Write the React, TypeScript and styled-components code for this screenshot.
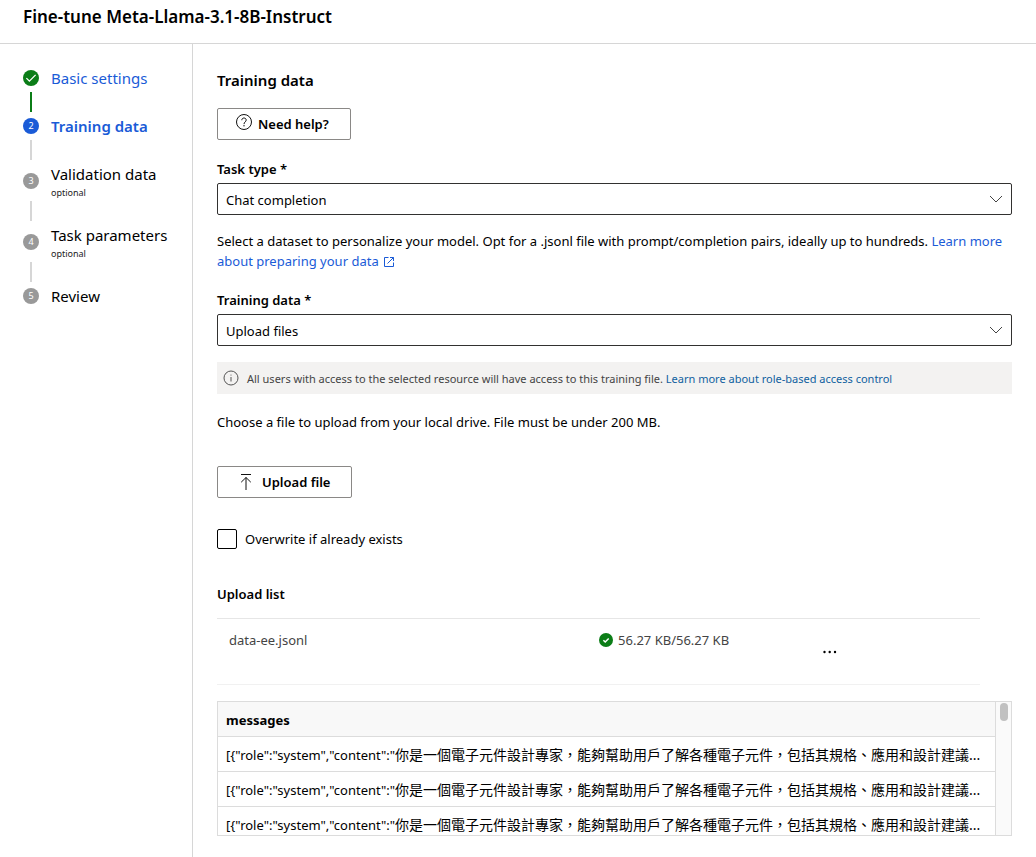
import React from 'react';
import styled, { createGlobalStyle } from 'styled-components';

const GlobalStyle = createGlobalStyle`
  *, *::before, *::after { box-sizing: border-box; }
  body {
    margin: 0;
    background: #fff;
    color: #000;
    font-family: "Noto Sans", "Noto Sans CJK TC", sans-serif;
    font-size: 13px;
    line-height: 20px;
  }
  button, select, input { font: inherit; color: inherit; }
`;

const Page = styled.div`
  display: flex;
  flex-direction: column;
  min-height: 100vh;
`;

const Header = styled.header`
  padding: 5px 23px 14px;
  border-bottom: 1px solid #d6d6d6;
`;

const Title = styled.h1`
  margin: 0;
  font-size: 17px;
  line-height: 24px;
  font-weight: 600;
`;

const Body = styled.div`
  display: flex;
  flex: 1;
`;

const Sidebar = styled.nav`
  flex: 0 0 193px;
  padding: 22px 16px 24px 23px;
  border-right: 1px solid #d6d6d6;
`;

const Steps = styled.ol`
  list-style: none;
  margin: 0;
  padding: 0;
`;

const StepLink = styled.a<{ $tone: string; $current?: boolean }>`
  display: flex;
  align-items: center;
  gap: 12px;
  color: ${(p) => p.$tone};
  font-size: 15px;
  line-height: 24px;
  font-weight: ${(p) => (p.$current ? 600 : 400)};
  text-decoration: none;
`;

const StepText = styled.span`
  display: flex;
  flex-direction: column;
`;

const Optional = styled.small`
  color: #222;
  font-size: 9px;
  line-height: 13px;
`;

const Badge = styled.span<{ $fill: string }>`
  display: flex;
  align-items: center;
  justify-content: center;
  flex: none;
  width: 16px;
  height: 16px;
  border-radius: 50%;
  background: ${(p) => p.$fill};
  color: #fff;
  font-size: 9px;
  line-height: 16px;
  font-weight: 400;
`;

const Connector = styled.div<{ $fill: string }>`
  width: 2px;
  height: 20px;
  margin: 2px 0 2px 7px;
  background: ${(p) => p.$fill};
`;

const Main = styled.main`
  flex: 1;
  min-width: 0;
  padding: 24px 24px 21px;
`;

const Heading = styled.h2`
  margin: 0 0 16px;
  font-size: 15px;
  line-height: 24px;
  font-weight: 600;
`;

const OutlineButton = styled.button<{ $gap: number; $pad: number }>`
  display: flex;
  align-items: center;
  gap: ${(p) => p.$gap}px;
  height: 32px;
  padding: 0 21px 0 ${(p) => p.$pad}px;
  border: 1px solid #8a8886;
  border-radius: 2px;
  background: #fff;
  font-weight: 600;
`;

const Field = styled.div`
  display: flex;
  flex-direction: column;
  gap: 4px;
  margin-top: 19px;
`;

const Label = styled.label`
  font-weight: 600;
`;

const SelectBox = styled.div`
  position: relative;
  svg {
    position: absolute;
    right: 9px;
    top: 10px;
    pointer-events: none;
  }
`;

const Select = styled.select`
  display: block;
  appearance: none;
  width: 100%;
  height: 32px;
  padding: 1px 32px 0 8px;
  border: 1px solid #323130;
  border-radius: 2px;
  background: #fff;
`;

const Paragraph = styled.p<{ $top: number }>`
  margin: ${(p) => p.$top}px 0 0;
`;

const Link = styled.a`
  color: #1a5bd7;
  text-decoration: none;
  svg { vertical-align: -1px; margin-left: 2px; }
`;

const Notice = styled.div`
  display: flex;
  align-items: center;
  gap: 8px;
  min-height: 32px;
  margin-top: 16px;
  padding: 2px 6px 0;
  background: #f3f2f1;
  color: #444;
  font-size: 11px;
`;

const NoticeLink = styled.a`
  color: #0f5f9f;
  text-decoration: none;
`;

const UploadArea = styled.div`
  margin-top: 34px;
`;

const CheckLabel = styled.label`
  display: flex;
  align-items: center;
  gap: 8px;
  margin-top: 31px;
`;

const Checkbox = styled.input`
  appearance: none;
  width: 20px;
  height: 20px;
  margin: 0;
  border: 1px solid #000;
  border-radius: 2px;
  background: #fff;
  &:checked { background: #1a5bd7; }
`;

const SubHeading = styled.h3`
  margin: 35px 0 14px;
  font-size: 13px;
  line-height: 20px;
  font-weight: 600;
`;

const UploadFrame = styled.div`
  margin: 0 32px 16px 0;
  border-top: 1px solid #e6e6e6;
  border-bottom: 1px solid #f1f1f1;
`;

const UploadTable = styled.table`
  width: 100%;
  table-layout: fixed;
  border-collapse: collapse;
  color: #444;
`;

const UploadCell = styled.td<{ $width?: string }>`
  width: ${(p) => p.$width || 'auto'};
  height: 65px;
  padding: 11px 12px 0;
  vertical-align: top;
`;

const ActionCell = styled.td`
  padding: 0 3px;
  vertical-align: middle;
`;

const Status = styled.span`
  display: flex;
  align-items: center;
  gap: 5px;
`;

const MoreButton = styled.button`
  display: flex;
  align-items: center;
  justify-content: center;
  width: 32px;
  height: 32px;
  padding: 0;
  border: 0;
  background: transparent;
`;

const Preview = styled.div`
  display: flex;
  height: 135px;
  border: 1px solid #dcdcdc;
`;

const PreviewScroll = styled.div`
  flex: 1;
  min-width: 0;
  overflow: hidden;
`;

const PreviewTable = styled.table`
  width: 100%;
  table-layout: fixed;
  border-collapse: separate;
  border-spacing: 0;
  th, td {
    height: 35px;
    padding: 2px 8px 0;
    border-bottom: 1px solid #dcdcdc;
    text-align: left;
    white-space: nowrap;
    overflow: hidden;
  }
  th {
    background: #f8f8f8;
    font-weight: 700;
  }
`;

const Content = styled.span`
  font-size: 14px;
`;

const Track = styled.div`
  flex: 0 0 16px;
  padding: 1px 3px 0 4px;
  border-left: 1px solid #dcdcdc;
  background: #fafafa;
`;

const Thumb = styled.div`
  width: 8px;
  height: 18px;
  border-radius: 4px;
  background: #c1c1c1;
`;

const Chevron = () => (
  <svg width="14" height="12" viewBox="0 0 14 12" fill="none" stroke="#444" aria-hidden="true">
    <path d="M1 3l6 6 6-6" />
  </svg>
);

const CheckIcon = () => (
  <svg width="16" height="16" viewBox="0 0 16 16" fill="none" stroke="#fff" strokeWidth="1.3" aria-hidden="true">
    <path d="M3.4 8.1l3 3 6.2-6.2" />
  </svg>
);

const HelpIcon = () => (
  <svg width="16" height="20" viewBox="0 0 16 20" fill="none" stroke="#111" aria-hidden="true">
    <circle cx="8" cy="8" r="7.5" />
    <path d="M5.8 6.2C5.8 4.8 6.8 4 8 4s2.200.8 2.200 2.100c0 1.700-2.200 1.900-2.200 4" />
    <circle cx="8" cy="11.800" r=".7" fill="#111" stroke="none" />
  </svg>
);

const InfoIcon = () => (
  <svg width="16" height="19" viewBox="0 0 16 19" fill="none" stroke="#555" aria-hidden="true">
    <circle cx="8" cy="8" r="7" />
    <path d="M8 7v4.500" />
    <circle cx="8" cy="5" r=".6" fill="#555" stroke="none" />
  </svg>
);

const ExternalIcon = () => (
  <svg width="10" height="10" viewBox="0 0 10 10" fill="none" stroke="currentColor" aria-hidden="true">
    <path d="M4.500.5h-4v9h9v-4M6 .5h3.500V4M9.500.5L3.500 6.500" />
  </svg>
);

const UploadIcon = () => (
  <svg width="12" height="16" viewBox="0 0 12 16" fill="none" stroke="#111" aria-hidden="true">
    <path d="M1 .5h10M6 16V3.500M1.200 8.200L6 3.500l4.800 4.700" />
  </svg>
);

const DoneIcon = () => (
  <svg width="14" height="14" viewBox="0 0 14 14" fill="none" aria-hidden="true">
    <circle cx="7" cy="7" r="7" fill="#0b7d17" />
    <path d="M4.400 7.200l1.800 1.800 3.500-3.600" stroke="#fff" strokeWidth="1.500" />
  </svg>
);

const MoreIcon = () => (
  <svg width="14" height="4" viewBox="0 0 14 4" fill="#000" aria-hidden="true">
    <circle cx="1.500" cy="2" r="1.200" />
    <circle cx="6.700" cy="2" r="1.200" />
    <circle cx="12" cy="2" r="1.200" />
  </svg>
);

type Step = { name: string; state: 'done' | 'current' | 'todo'; optional?: boolean };

const steps: Step[] = [
  { name: 'Basic settings', state: 'done' },
  { name: 'Training data', state: 'current' },
  { name: 'Validation data', state: 'todo', optional: true },
  { name: 'Task parameters', state: 'todo', optional: true },
  { name: 'Review', state: 'todo' },
];

const badgeFill = { done: '#0b7d17', current: '#1a5bd7', todo: '#999' };

const rows = [0, 1, 2].map(() => ({
  prefix: '[{"role":"system","content":"',
  content: '你是一個電子元件設計專家，能夠幫助用戶了解各種電子元件，包括其規格、應用和設計建議',
}));

export default function App() {
  return (
    <Page>
      <GlobalStyle />
      <Header>
        <Title>Fine-tune Meta-Llama-3.1-8B-Instruct</Title>
      </Header>
      <Body>
        <Sidebar aria-label="Steps">
          <Steps>
            {steps.map((step, i) => (
              <li key={step.name}>
                <StepLink
                  href="#"
                  $tone={step.state === 'todo' ? '#000' : '#1a5bd7'}
                  $current={step.state === 'current'}
                  aria-current={step.state === 'current' ? 'step' : undefined}
                >
                  <Badge $fill={badgeFill[step.state]}>
                    {step.state === 'done' ? <CheckIcon /> : i + 1}
                  </Badge>
                  <StepText>
                    {step.name}
                    {step.optional && <Optional>optional</Optional>}
                  </StepText>
                </StepLink>
                {i < steps.length - 1 && (
                  <Connector $fill={step.state === 'done' ? '#0b7d17' : '#d6d6d6'} />
                )}
              </li>
            ))}
          </Steps>
        </Sidebar>
        <Main>
          <Heading>Training data</Heading>
          <OutlineButton type="button" $gap={6} $pad={18}>
            <HelpIcon />
            Need help?
          </OutlineButton>
          <Field>
            <Label htmlFor="task-type">Task type *</Label>
            <SelectBox>
              <Select id="task-type" defaultValue="chat">
                <option value="chat">Chat completion</option>
              </Select>
              <Chevron />
            </SelectBox>
          </Field>
          <Paragraph $top={16}>
            Select a dataset to personalize your model. Opt for a .jsonl file with prompt/completion
            pairs, ideally up to hundreds.{' '}
            <Link href="#">
              Learn more about preparing your data <ExternalIcon />
            </Link>
          </Paragraph>
          <Field>
            <Label htmlFor="training-data">Training data *</Label>
            <SelectBox>
              <Select id="training-data" defaultValue="upload">
                <option value="upload">Upload files</option>
              </Select>
              <Chevron />
            </SelectBox>
          </Field>
          <Notice>
            <InfoIcon />
            <span>
              All users with access to the selected resource will have access to this training file.{' '}
              <NoticeLink href="#">Learn more about role-based access control</NoticeLink>
            </span>
          </Notice>
          <Paragraph $top={18}>
            Choose a file to upload from your local drive. File must be under 200 MB.
          </Paragraph>
          <UploadArea>
            <OutlineButton type="button" $gap={10} $pad={22}>
              <UploadIcon />
              Upload file
            </OutlineButton>
          </UploadArea>
          <CheckLabel>
            <Checkbox type="checkbox" />
            Overwrite if already exists
          </CheckLabel>
          <SubHeading>Upload list</SubHeading>
          <UploadFrame>
            <UploadTable>
              <tbody>
                <tr>
                  <UploadCell $width="48.5%">data-ee.jsonl</UploadCell>
                  <UploadCell $width="29.3%">
                    <Status>
                      <DoneIcon />
                      56.27 KB/56.27 KB
                    </Status>
                  </UploadCell>
                  <ActionCell>
                    <MoreButton type="button" aria-label="More actions">
                      <MoreIcon />
                    </MoreButton>
                  </ActionCell>
                </tr>
              </tbody>
            </UploadTable>
          </UploadFrame>
          <Preview>
            <PreviewScroll>
              <PreviewTable>
                <thead>
                  <tr>
                    <th scope="col">messages</th>
                  </tr>
                </thead>
                <tbody>
                  {rows.map((row, i) => (
                    <tr key={i}>
                      <td>
                        {row.prefix}
                        <Content>{row.content}...</Content>
                      </td>
                    </tr>
                  ))}
                </tbody>
              </PreviewTable>
            </PreviewScroll>
            <Track>
              <Thumb />
            </Track>
          </Preview>
        </Main>
      </Body>
    </Page>
  );
}
